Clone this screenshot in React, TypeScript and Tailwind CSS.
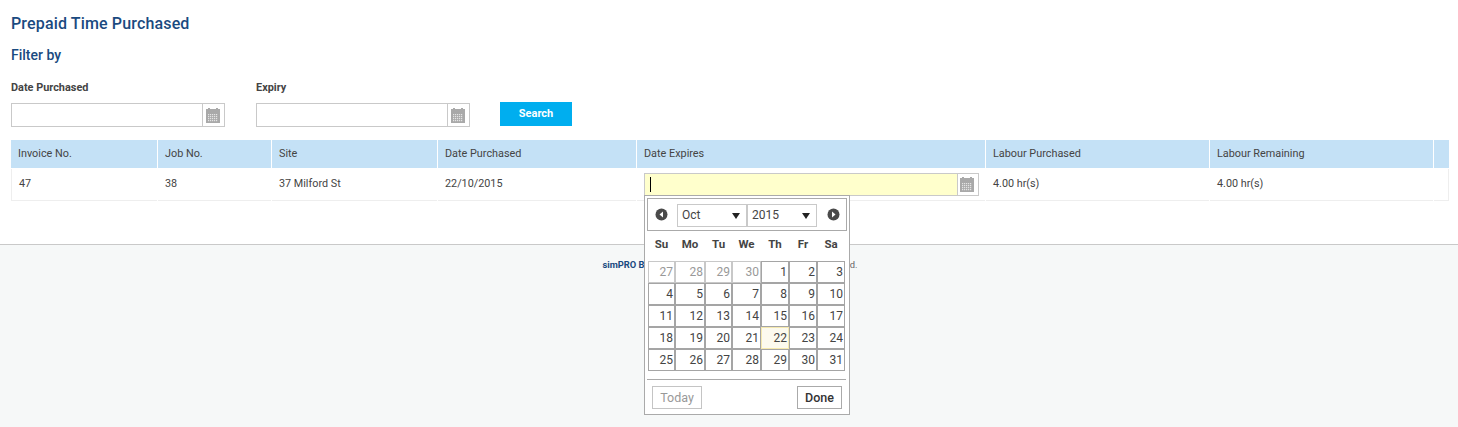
const columns = [
  { title: "Invoice No.", value: "47" },
  { title: "Job No.", value: "38" },
  { title: "Site", value: "37 Milford St" },
  { title: "Date Purchased", value: "22/10/2015" },
  { title: "Date Expires", value: "" },
  { title: "Labour Purchased", value: "4.00 hr(s)" },
  { title: "Labour Remaining", value: "4.00 hr(s)" },
  { title: "", value: "" },
];

const gridCols = "grid grid-cols-[146px_113px_165px_198px_348px_223px_223px_15px] gap-x-px";

const weeks = [
  [27, 28, 29, 30, 1, 2, 3],
  [4, 5, 6, 7, 8, 9, 10],
  [11, 12, 13, 14, 15, 16, 17],
  [18, 19, 20, 21, 22, 23, 24],
  [25, 26, 27, 28, 29, 30, 31],
];

const dayWidths = ["w-[27px]", "w-[30px]", "w-[27px]", "w-[29px]", "w-[28px]", "w-[28px]", "w-[28px]"];

function CalendarIcon() {
  return (
    <svg width="14" height="15" viewBox="0 0 14 15" className="-ml-[2px] block">
      <path fill="#a9a9a9" d="M0 1h2V0h2v1h6V0h2v1h2v14H0z" />
      <g fill="#e4e4e4">
        {[6, 8, 10, 12].map((y) =>
          [2, 4, 6, 8, 10].map((x) => <rect key={`${x}-${y}`} x={x} y={y} width="1.2" height="1.2" />)
        )}
      </g>
    </svg>
  );
}

function DateInput({ width }: { width: string }) {
  return (
    <div className={`flex h-6 border border-[#c9c9c9] bg-white ${width}`}>
      <div className="flex-1" />
      <div className="flex w-[22px] items-center justify-center border-l border-[#c9c9c9]">
        <CalendarIcon />
      </div>
    </div>
  );
}

function NavArrow({ dir }: { dir: "left" | "right" }) {
  return (
    <svg width="13" height="13" viewBox="0 0 13 13">
      <circle cx="6.5" cy="6.5" r="6" fill="#4a4a4a" />
      <path fill="#fff" d={dir === "left" ? "M8 3.5v6L4.5 6.5z" : "M5 3.5v6l3.5-3z"} />
    </svg>
  );
}

function MonthSelect({ label }: { label: string }) {
  return (
    <div className="flex h-[23px] w-[70px] items-center justify-between border border-[#c9c9c9] pl-1 pr-[6px] text-[12px] text-[#444]">
      <span>{label}</span>
      <span className="border-x-[4px] border-t-[6px] border-x-transparent border-t-[#222]" />
    </div>
  );
}

function DatePicker() {
  return (
    <div className="absolute left-0 top-[22px] z-10 h-[220px] w-[206px] border border-[#aaaaaa] bg-white px-[2px] pt-[2px] font-['Roboto',sans-serif]">
      <div className="flex h-[33px] items-center border border-[#aaaaaa] pl-[7px] pr-[6px]">
        <NavArrow dir="left" />
        <div className="ml-[9px] mt-[2px] flex">
          <MonthSelect label="Oct" />
          <MonthSelect label="2015" />
        </div>
        <div className="ml-[10px]">
          <NavArrow dir="right" />
        </div>
      </div>
      <div className="ml-[1px] flex h-[30px] items-center pb-[3px]">
        {["Su", "Mo", "Tu", "We", "Th", "Fr", "Sa"].map((d, i) => (
          <div key={d} className={`${dayWidths[i]} text-center text-[11.5px] font-bold text-[#444]`}>
            {d}
          </div>
        ))}
      </div>
      <div className="ml-[1px]">
        {weeks.map((week, r) => (
          <div key={r} className="flex h-[22px]">
            {week.map((day, c) => {
              const faded = r === 0 && day > 20;
              const today = day === 22;
              return (
                <div
                  key={c}
                  className={`${dayWidths[c]} border pr-[1px] text-right text-[12px] leading-[20px] ${
                    faded
                      ? "border-[#c8c8c8] text-[#999]"
                      : today
                        ? "border-[#f5e9ae] bg-[#fcfaee] text-[#444]"
                        : "border-[#a5a5a5] text-[#444]"
                  }`}
                >
                  {day}
                </div>
              );
            })}
          </div>
        ))}
      </div>
      <div className="mt-2 h-px w-[199px] bg-[#aaaaaa]" />
      <div className="flex justify-between pl-[5px] pr-[5px] pt-[6px]">
        <button className="h-[23px] w-[50px] border border-[#c4c4c4] text-[12.5px] leading-4 text-[#999]">Today</button>
        <button className="h-[23px] w-[45px] border border-[#aaaaaa] text-[12.5px] font-medium leading-4 text-[#333]">Done</button>
      </div>
    </div>
  );
}

export default function App() {
  return (
    <div className="flex h-screen flex-col overflow-hidden bg-white font-['Roboto',sans-serif] text-[#444]">
      <div className="h-[244px] px-[11px] pt-[14px]">
        <h1 className="text-[16px] font-medium leading-5 tracking-[0.15px] text-[#1a4a80]">Prepaid Time Purchased</h1>
        <h2 className="mt-[11px] text-[14px] font-medium leading-5 text-[#1a4a80]">Filter by</h2>

        <div className="mt-[15px] flex">
          <div className="w-[245px]">
            <label className="block text-[10.9px] font-bold leading-4 text-[#444]">Date Purchased</label>
            <div className="mt-[7px]">
              <DateInput width="w-[214px]" />
            </div>
          </div>
          <div>
            <label className="block text-[10.9px] font-bold leading-4 text-[#444]">Expiry</label>
            <div className="mt-[7px]">
              <DateInput width="w-[214px]" />
            </div>
          </div>
          <button className="ml-[30px] mt-[22px] h-6 w-[72px] bg-[#00aeef] text-[11px] font-bold text-white">Search</button>
        </div>

        <div className="mt-[13px] w-[1438px]">
          <div className={gridCols}>
            {columns.map((col, i) => (
              <div key={i} className="h-7 bg-[#c4e1f6] pl-[7px] text-[10.85px] leading-7 text-[#444]">
                {col.title}
              </div>
            ))}
          </div>
          <div className={`${gridCols} mt-px`}>
            {columns.map((col, i) => (
              <div
                key={i}
                className={`h-[32px] border-b border-[#eeeeee] pl-[7px] text-[10.8px] leading-[29px] ${
                  i === 0 ? "border-l" : ""
                } ${i === 7 ? "border-r" : ""}`}
              >
                {i === 4 ? (
                  <div className="relative mt-[4px] w-[335px]">
                    <div className="flex h-[23px] border border-[#c9c9c9]">
                      <div className="flex flex-1 items-center bg-[#ffffcc] pl-[5px]">
                        <span className="h-[15px] w-px bg-black" />
                      </div>
                      <div className="flex w-[21px] items-center justify-center border-l border-[#c9c9c9] bg-white">
                        <CalendarIcon />
                      </div>
                    </div>
                    <DatePicker />
                  </div>
                ) : (
                  col.value
                )}
              </div>
            ))}
          </div>
        </div>
      </div>

      <footer className="flex-1 border-t border-[#c9c9c9] bg-[#f6f8f8] pl-[2px] pt-[12px] text-center text-[9.35px] leading-4 text-[#666]">
        <b className="text-[#1a4a80]">simPRO Business Solutions</b> © 2002-2015. All rights reserved.
      </footer>
    </div>
  );
}
